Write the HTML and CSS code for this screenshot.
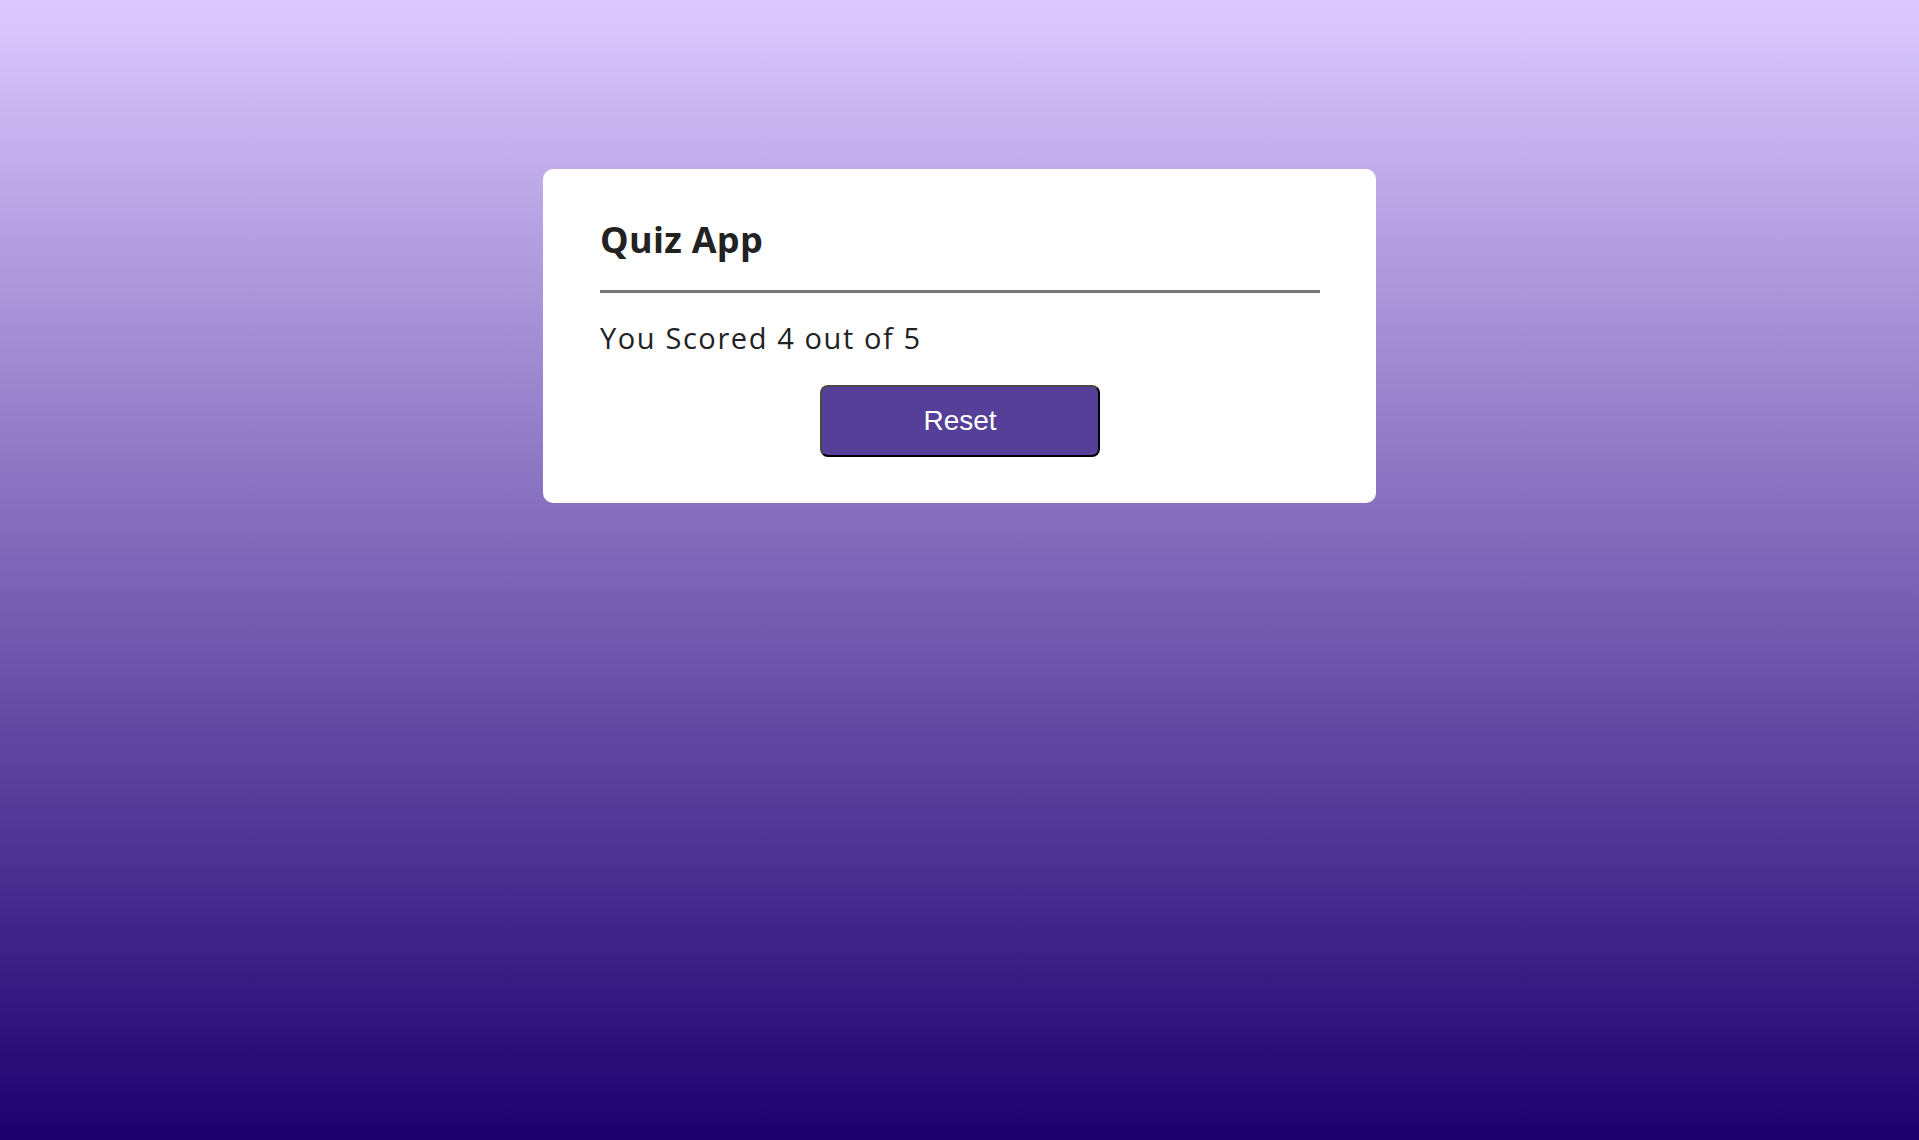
FILE: index.html
```
<!DOCTYPE html>
<html lang="en">
<head>
<meta charset="utf-8">
<title>Quiz App</title>
<link rel="stylesheet" href="styles.css">
</head>
<body>
  <main class="app">
    <h1 class="app-title">Quiz App</h1>
    <div class="quiz">
      <p class="score">You Scored 4 out of 5</p>
      <div class="actions">
        <button class="btn-reset" type="button">Reset</button>
      </div>
    </div>
  </main>
</body>
</html>
```

FILE: styles.css
```
* {
  box-sizing: border-box;
}

html {
  min-height: 100%;
}

body {
  margin: 0;
  min-height: 100vh;
  padding-top: 169px;
  background: linear-gradient(to bottom, #dccaff 0%, #1c006e 100%);
  font-family: "Open Sans", "Liberation Sans", sans-serif;
  color: #222;
}

.app {
  width: 833px;
  margin: 0 auto;
  background: #fff;
  border-radius: 10px;
  padding: 53px 56px 46px 57px;
}

.app-title {
  margin: 0;
  font-size: 36px;
  line-height: 36px;
  font-weight: 700;
  letter-spacing: 0.3px;
  color: #222;
  padding-bottom: 32px;
  border-bottom: 3px solid #777;
}

.score {
  margin: 30px 0 0;
  font-size: 29px;
  line-height: 29px;
  font-weight: 400;
  letter-spacing: 1.6px;
  color: #222;
}

.actions {
  display: flex;
  justify-content: center;
  margin-top: 33px;
}

.btn-reset {
  width: 280px;
  height: 72px;
  background: #563f99;
  color: #fff;
  font-family: "Liberation Sans", Arial, sans-serif;
  font-size: 28px;
  border: 2px solid;
  border-color: #4a4a4a #000 #000 #4a4a4a;
  border-radius: 8px;
  cursor: pointer;
  padding: 0;
}
```
